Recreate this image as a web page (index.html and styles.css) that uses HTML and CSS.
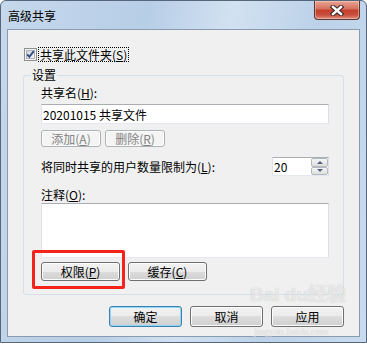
FILE: index.html
```html
<!DOCTYPE html>
<html lang="zh-CN">
<head>
  <meta charset="UTF-8">
  <title>高级共享</title>
  <link rel="stylesheet" href="styles.css">
</head>
<body>
  <div class="window">
    <div class="titlebar">
      <span class="title">高级共享</span>
      <button class="close-btn" aria-label="关闭">
        <svg width="14" height="11" viewBox="0 0 14 11">
          <path d="M3 2 L11 9 M11 2 L3 9" stroke="#3d2a2a" stroke-width="4.6" stroke-linecap="square" fill="none"/>
          <path d="M3 2 L11 9 M11 2 L3 9" stroke="#fff" stroke-width="2.4" stroke-linecap="square" fill="none"/>
        </svg>
      </button>
    </div>

    <div class="client">
      <label class="share-check">
        <span class="checkbox">
          <svg width="13" height="13" viewBox="0 0 13 13">
            <defs>
              <linearGradient id="cbInner" x1="0" y1="0" x2="1" y2="1">
                <stop offset="0" stop-color="#cbcfd5"/>
                <stop offset="1" stop-color="#f7f7f7"/>
              </linearGradient>
            </defs>
            <rect x="0.5" y="0.5" width="12" height="12" fill="#f4f4f4" stroke="#8e8f8f"/>
            <rect x="2.5" y="2.5" width="8" height="8" fill="url(#cbInner)" stroke="#aeb3b9"/>
            <path d="M3.2 6.4 L5.4 8.8 L9.8 3.2" stroke="#324c86" stroke-width="1.9" fill="none"/>
          </svg>
        </span>
        <span class="focus">共享此文件夹(<u>S</u>)</span>
      </label>

      <div class="group">
        <span class="group-title">设置</span>
        <div class="field-label">共享名(<u>H</u>):</div>
        <input class="textbox" type="text" value="20201015 共享文件">
        <div class="btn-row">
          <button class="btn small" disabled>添加(<u>A</u>)</button>
          <button class="btn small" disabled>删除(<u>R</u>)</button>
        </div>
        <div class="limit-row">
          <span>将同时共享的用户数量限制为(<u>L</u>):</span>
          <div class="spinner">
            <span class="spin-value">20</span>
            <div class="spin-buttons">
              <span class="spin-btn up"></span>
              <span class="spin-btn down"></span>
            </div>
          </div>
        </div>
        <div class="field-label comment-label">注释(<u>O</u>):</div>
        <div class="textarea"></div>
        <div class="btn-row perm-row">
          <span class="highlight-wrap">
            <button class="btn">权限(<u>P</u>)</button>
            <span class="highlight"></span>
          </span>
          <button class="btn">缓存(<u>C</u>)</button>
        </div>
      </div>

      <div class="dialog-buttons">
        <button class="btn default">确定</button>
        <button class="btn">取消</button>
        <button class="btn">应用</button>
      </div>

      <!-- faint watermark from the source screenshot -->
      <span class="wm-logo">Bai du经验</span>
      <span class="wm-url">jingyan.baidu.com</span>
    </div>
  </div>
</body>
</html>
```

FILE: styles.css
```css
* {
  box-sizing: border-box;
}

body {
  margin: 0;
  width: 367px;
  height: 345px;
  background: #fff;
  font-family: "Noto Sans CJK SC", "Liberation Sans", sans-serif;
  font-size: 12px;
  color: #000;
}

u {
  text-underline-offset: 1px;
}

.window {
  width: 367px;
  height: 343px;
  border: 1px solid #56677b;
  border-radius: 6px 6px 0 0;
  padding: 0 6px 5px 6px;
  background: linear-gradient(100deg, #c5d8ec 0%, #b7cee7 35%, #d2e1f1 55%, #bcd2e9 75%, #c9dbee 100%);
  display: flex;
  flex-direction: column;
}

.titlebar {
  height: 28px;
  display: flex;
  justify-content: space-between;
  align-items: flex-start;
}

.title {
  margin: 9px 0 0 1px;
  line-height: 12px;
}

.close-btn {
  width: 46px;
  height: 19px;
  padding: 0;
  border: 1px solid #5b3630;
  border-top: none;
  border-radius: 0 0 4px 4px;
  background: linear-gradient(#e9a696 0%, #d8725f 42%, #c43f2c 52%, #c9503d 78%, #e0917f 100%);
  box-shadow: inset 0 0 0 1px rgba(255, 220, 210, 0.45);
  display: flex;
  align-items: center;
  justify-content: center;
}

.client {
  flex: 1;
  position: relative;
  background: #f0f0f0;
  border: 1px solid #8a9bb0;
  padding: 17px 15px 0 15px;
  display: flex;
  flex-direction: column;
}

.share-check {
  display: flex;
  align-items: center;
  gap: 1px;
  margin-left: 1px;
  height: 15px;
}

.checkbox {
  width: 13px;
  height: 13px;
  display: flex;
}

.focus {
  border: 1px dotted #000;
  padding: 0 1px;
  line-height: 13px;
}

.group {
  margin-top: 13px;
  border: 1px solid #d5dfe5;
  border-radius: 3px;
  padding: 0 14px 13px 17px;
  display: flex;
  flex-direction: column;
}

.group-title {
  align-self: flex-start;
  margin: -7px 0 0 -10px;
  padding: 0 1px;
  line-height: 12px;
  background: #f0f0f0;
}

.field-label {
  margin-top: 6px;
  line-height: 12px;
}

.textbox {
  display: block;
  width: 100%;
  height: 20px;
  margin-top: 5px;
  padding: 0 1px;
  border: 1px solid;
  border-color: #abadb3 #dbdfe6 #e3e9ef #e2e3ea;
  background: #fff;
  font: inherit;
  color: #000;
  outline: none;
}

.btn-row {
  display: flex;
  gap: 4px;
  margin-top: 6px;
}

.btn {
  height: 19px;
  width: 79px;
  padding: 0;
  border: 1px solid #707070;
  border-radius: 3px;
  background: linear-gradient(#f2f2f2 0%, #ebebeb 50%, #dddddd 50%, #cfcfcf 100%);
  box-shadow: inset 0 0 0 1px #fcfcfc;
  font: inherit;
  line-height: 1;
  color: #000;
}

.btn.small {
  width: 60px;
  height: 17px;
}

.btn:disabled {
  border-color: #adb2b5;
  background: #f4f4f4;
  color: #838383;
}

.limit-row {
  display: flex;
  justify-content: space-between;
  align-items: center;
  margin-top: 10px;
}

.spinner {
  width: 57px;
  height: 19px;
  display: flex;
  border: 1px solid;
  border-color: #abadb3 #dbdfe6 #e3e9ef #e2e3ea;
  background: #fff;
}

.spin-value {
  flex: 1;
  padding-left: 1px;
  line-height: 17px;
}

.spin-buttons {
  width: 17px;
  display: flex;
  flex-direction: column;
}

.spin-btn {
  flex: 1;
  display: flex;
  align-items: center;
  justify-content: center;
  border: 1px solid #b4b9c0;
  border-radius: 2px;
  background: linear-gradient(#f6f6f6, #dedede);
}

.spin-btn::after {
  content: "";
  border-left: 3px solid transparent;
  border-right: 3px solid transparent;
}

.spin-btn.up::after {
  border-bottom: 3px solid #4d6185;
}

.spin-btn.down::after {
  border-top: 3px solid #4d6185;
}

.comment-label {
  margin-top: 13px;
}

.textarea {
  height: 55px;
  margin-top: 2px;
  border: 1px solid;
  border-color: #abadb3 #dbdfe6 #e3e9ef #e2e3ea;
  background: #fff;
}

.perm-row {
  gap: 8px;
  margin-top: 4px;
}

.highlight-wrap {
  position: relative;
  display: flex;
}

.highlight {
  position: absolute;
  left: -9px;
  top: -12px;
  width: 93px;
  height: 39px;
  border: 3px solid #f5231b;
  border-radius: 2px;
}

.dialog-buttons {
  display: flex;
  justify-content: flex-end;
  gap: 8px;
  margin-top: 11px;
}

.dialog-buttons .btn {
  width: 73px;
  height: 21px;
}

.btn.default {
  border-color: #3c7fb1;
  box-shadow: inset 0 0 0 1px #8fd7f7;
}

.wm-logo,
.wm-url {
  position: absolute;
  pointer-events: none;
  white-space: nowrap;
  color: rgba(255, 255, 255, 0.65);
  text-shadow: 0 0 1px rgba(90, 90, 90, 0.35);
}

.wm-logo {
  left: 242px;
  top: 255px;
  font-family: "Liberation Sans", "Noto Sans CJK SC", sans-serif;
  font-size: 19px;
  font-weight: bold;
  line-height: 20px;
}

.wm-url {
  left: 246px;
  top: 297px;
  font-family: "Liberation Serif", serif;
  font-size: 10px;
  line-height: 10px;
}
```
